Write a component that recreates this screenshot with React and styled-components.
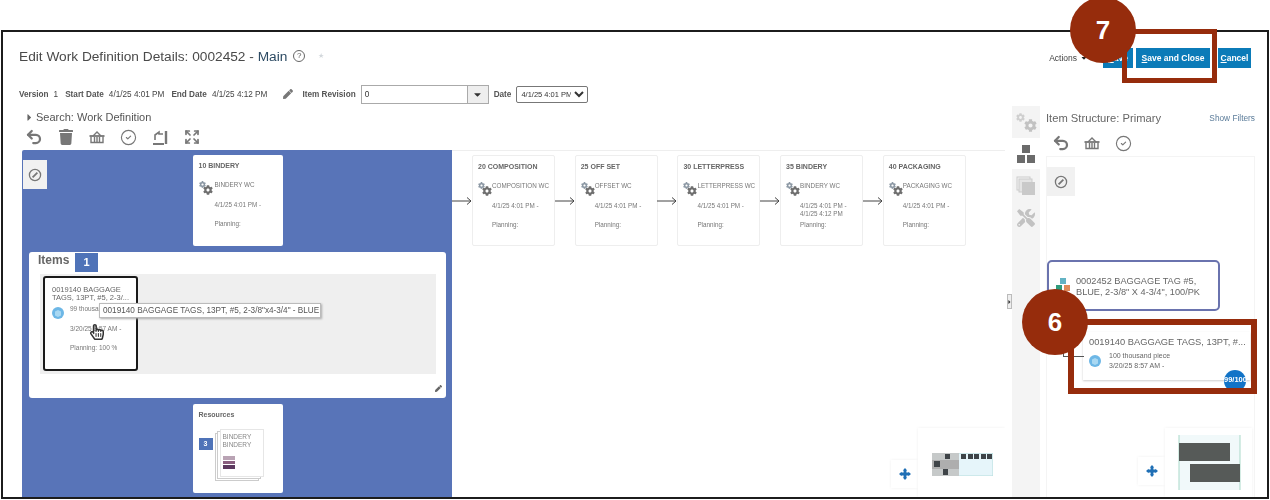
import React from 'react';
import styled, { createGlobalStyle } from 'styled-components';
import { CircleCheck, Expand, Undo2 } from 'lucide-react';
import { FaCaretDown, FaCaretRight, FaCog, FaPen, FaRegHandPointer, FaTools, FaTrash } from 'react-icons/fa';

const Global = createGlobalStyle`
    html, body { margin: 0; padding: 0; background: #fff; }
    body { font-family: "Liberation Sans", Arial, sans-serif; color: #555; }
`;

const operations = [
    { title: '20 COMPOSITION', wc: 'COMPOSITION WC', dates: ['4/1/25 4:01 PM -'] },
    { title: '25 OFF SET', wc: 'OFFSET WC', dates: ['4/1/25 4:01 PM -'] },
    { title: '30 LETTERPRESS', wc: 'LETTERPRESS WC', dates: ['4/1/25 4:01 PM -'] },
    { title: '35 BINDERY', wc: 'BINDERY WC', dates: ['4/1/25 4:01 PM -', '4/1/25 4:12 PM'] },
    { title: '40 PACKAGING', wc: 'PACKAGING WC', dates: ['4/1/25 4:01 PM -'] },
];

const Basket = ({ size = 18 }) => (
    <svg width={size} height={size} viewBox="0 0 18 18" fill="none" stroke="#777" strokeWidth="1.4">
        <path d="M5 8l4-4 4 4" />
        <path d="M1.5 8h15" strokeWidth="1.8" />
        <path d="M3 8.5v6h12v-6M6.5 9v5M9 9v5M11.5 9v5" />
    </svg>
);

const MoveBack = () => (
    <svg width="18" height="18" viewBox="0 0 18 18" fill="none" stroke="#777">
        <path d="M2 16h11" strokeWidth="2" />
        <path d="M15 3v13" strokeWidth="2.4" />
        <path d="M4 12V7l4-3v2h4" strokeWidth="1.6" />
    </svg>
);

const CompassMark = () => (
    <svg width="14" height="14" viewBox="0 0 14 14" fill="none" stroke="#777" strokeWidth="1.3">
        <circle cx="7" cy="7" r="5.6" />
        <path d="M4.6 9.4L9.4 4.6" strokeWidth="1.8" />
    </svg>
);

const Gears = () => (
    <GearBox>
        <FaCog size={7} color="#8c98a4" />
        <GearLarge><FaCog size={10} color="#6f6f6f" /></GearLarge>
    </GearBox>
);

const Cube = ({ $size = 12 }) => (
    <svg width={$size} height={$size} viewBox="0 0 12 12">
        <circle cx="6" cy="6" r="6" fill="#6db7e6" />
        <path d="M3 4.5L6 3l3 1.5v4L6 10 3 8.5z" fill="#a9d8f2" />
    </svg>
);

const Move = () => (
    <svg width="12" height="12" viewBox="0 0 13 13" fill="#1f6fb5">
        <path d="M6.5 0l2.4 2.8H8V5h2.2v-.9L13 6.5l-2.8 2.4V8H8v2.2h.9L6.5 13l-2.4-2.8H5V8H2.8v.9L0 6.5l2.8-2.4V5H5V2.8h-.9z" />
    </svg>
);

const OperationCard = ({ title, wc, dates }) => (
    <NodeCard>
        <NodeTitle>{title}</NodeTitle>
        <NodeBody>
            <Gears />
            <NodeLines>
                <NodeLine>{wc}</NodeLine>
                <NodeLine>{dates.map((d) => <div key={d}>{d}</div>)}</NodeLine>
                <NodeLine>Planning:</NodeLine>
            </NodeLines>
        </NodeBody>
    </NodeCard>
);

const Arrow = () => (
    <svg width="20" height="10" viewBox="0 0 20 10" fill="none" stroke="#444" strokeWidth="1">
        <path d="M0 5h19M15 1.5L19 5l-4 3.5" />
    </svg>
);

const App = () => {
    return (
        <Page>
            <Global />
            <Frame>
                <Header>
                    <TitleGroup>
                        <Title>Edit Work Definition Details: 0002452 - <TitleLink>Main</TitleLink></Title>
                        <HelpMark>?</HelpMark>
                        <FavDot>★</FavDot>
                    </TitleGroup>
                    <Actions>
                        <ActionsLabel>Actions <FaCaretDown size={8} color="#222" /></ActionsLabel>
                        <BlueButton $w={30} $gap={0}><u>S</u>ave</BlueButton>
                        <BlueButton $w={74} $gap={3}><u>S</u>ave and Close</BlueButton>
                        <BlueButton $w={33} $gap={8}><u>C</u>ancel</BlueButton>
                    </Actions>
                </Header>
                <Meta>
                    <MetaLabel>Version</MetaLabel><MetaValue>1</MetaValue>
                    <MetaLabel>Start Date</MetaLabel><MetaValue>4/1/25 4:01 PM</MetaValue>
                    <MetaLabel>End Date</MetaLabel><MetaValue>4/1/25 4:12 PM</MetaValue>
                    <PenBox><FaPen size={10} color="#777" /></PenBox>
                    <MetaLabel>Item Revision</MetaLabel>
                    <RevisionField>
                        <span>0</span>
                        <RevisionButton><FaCaretDown size={11} color="#333" /></RevisionButton>
                    </RevisionField>
                    <MetaLabel>Date</MetaLabel>
                    <DateSelect defaultValue="a"><option value="a">4/1/25 4:01 PM</option></DateSelect>
                </Meta>
                <Body>
                    <LeftColumn>
                        <SearchRow><FaCaretRight size={11} color="#666" />Search: Work Definition</SearchRow>
                        <Toolbar $gap={13.5} $left={3}>
                            <ToolIcon><Undo2 size={18} strokeWidth={3} color="#777" /></ToolIcon>
                            <ToolIcon><FaTrash size={16} color="#777" /></ToolIcon>
                            <ToolIcon><Basket /></ToolIcon>
                            <ToolIcon><CircleCheck size={17} strokeWidth={1.6} color="#777" /></ToolIcon>
                            <ToolIcon><MoveBack /></ToolIcon>
                            <ToolIcon><Expand size={16} strokeWidth={2.6} color="#777" /></ToolIcon>
                        </Toolbar>
                        <Canvas>
                            <BlueColumn>
                                <CompassButton $left={1} $top={10}><CompassMark /></CompassButton>
                                <OperationCard title="10 BINDERY" wc="BINDERY WC" dates={['4/1/25 4:01 PM -']} />
                                <ItemsPanel>
                                    <ItemsHeader>
                                        <ItemsTitle>Items</ItemsTitle>
                                        <CountBadge>1</CountBadge>
                                    </ItemsHeader>
                                    <ItemsTray>
                                        <ItemCard>
                                            <ItemTitle>0019140 BAGGAGE TAGS, 13PT, #5, 2-3/...</ItemTitle>
                                            <NodeBody>
                                                <ItemIcon><Cube /></ItemIcon>
                                                <NodeLines>
                                                    <NodeLine>99 thousand piece</NodeLine>
                                                    <NodeLine>3/20/25 8:57 AM -</NodeLine>
                                                    <NodeLine>Planning: 100 %</NodeLine>
                                                </NodeLines>
                                            </NodeBody>
                                            <HandCursor><FaRegHandPointer size={16} color="#333" /></HandCursor>
                                        </ItemCard>
                                        <Tooltip>0019140 BAGGAGE TAGS, 13PT, #5, 2-3/8"x4-3/4" - BLUE</Tooltip>
                                    </ItemsTray>
                                    <PanelPen><FaPen size={7} color="#666" /></PanelPen>
                                </ItemsPanel>
                                <ResourcesCard>
                                    <NodeTitle>Resources</NodeTitle>
                                    <ResourcesBody>
                                        <ResourceCount>3</ResourceCount>
                                        <ResourceStack>
                                            <div>BINDERY</div>
                                            <div>BINDERY</div>
                                            <ResourceBars>
                                                <ResourceBar $c="#b9a3b4" />
                                                <ResourceBar $c="#8a5f80" />
                                                <ResourceBar $c="#5d3a60" />
                                            </ResourceBars>
                                        </ResourceStack>
                                    </ResourcesBody>
                                </ResourcesCard>
                            </BlueColumn>
                            <FlowArea>
                                {operations.map((op) => (
                                    <FlowStep key={op.title}>
                                        <Arrow />
                                        <OperationCard {...op} />
                                    </FlowStep>
                                ))}
                                <PlusButton $right={87} $bottom={9}><Move /></PlusButton>
                                <Minimap $right={0} $pad="4px 0 0 2px">
                                    <svg width="61" height="23" viewBox="0 0 61 23">
                                        <rect width="61" height="23" fill="#e6f5fa" stroke="#b5dcdc" />
                                        <rect width="27" height="23" fill="#c6c9c9" />
                                        <rect x="0" y="7" width="27" height="9" fill="#aeaeae" />
                                        <rect x="13" y="1" width="5" height="5" fill="#3f4448" />
                                        <rect x="2" y="8" width="6" height="6" fill="#3f4448" />
                                        <rect x="11" y="16" width="5" height="6" fill="#3f4448" />
                                        {[29, 36, 42, 49, 55].map((x) => (
                                            <rect key={x} x={x} y="1" width="5" height="5" fill="#3f4448" />
                                        ))}
                                    </svg>
                                </Minimap>
                            </FlowArea>
                        </Canvas>
                    </LeftColumn>
                    <Splitter><SplitHandle><FaCaretRight size={6} color="#333" /></SplitHandle></Splitter>
                    <RightPanel>
                        <SideTabs>
                            <SideTab><GearsLarge><FaCog size={9} color="#cfcfcf" /><GearLow><FaCog size={13} color="#c2c2c2" /></GearLow></GearsLarge></SideTab>
                            <SideTab $active>
                                <svg width="20" height="20" viewBox="0 0 20 20" fill="#6b6b6b">
                                    <rect x="6" y="1" width="8" height="8" />
                                    <rect x="1" y="11" width="8" height="8" />
                                    <rect x="11" y="11" width="8" height="8" />
                                </svg>
                            </SideTab>
                            <SideTab>
                                <svg width="20" height="20" viewBox="0 0 20 20">
                                    <rect x="1" y="1" width="13" height="13" fill="none" stroke="#ccc" />
                                    <rect x="3" y="3" width="13" height="13" fill="#e4e4e4" stroke="#ccc" />
                                    <rect x="6" y="6" width="13" height="13" fill="#c9c9c9" />
                                </svg>
                            </SideTab>
                            <SideTab><FaTools size={18} color="#c2c2c2" /></SideTab>
                        </SideTabs>
                        <StructureColumn>
                            <StructureHeader>
                                <StructureTitle>Item Structure: Primary</StructureTitle>
                                <ShowFilters>Show Filters</ShowFilters>
                            </StructureHeader>
                            <Toolbar $gap={13} $left={6}>
                                <ToolIcon><Undo2 size={18} strokeWidth={3} color="#777" /></ToolIcon>
                                <ToolIcon><Basket /></ToolIcon>
                                <ToolIcon><CircleCheck size={17} strokeWidth={1.6} color="#777" /></ToolIcon>
                            </Toolbar>
                            <TreeArea>
                                <CompassButton $left={0} $top={10} $wide><CompassMark /></CompassButton>
                                <RootNode>
                                    <RootIcon>
                                        <svg width="17" height="17" viewBox="0 0 17 17">
                                            <rect x="5" y="1" width="6" height="6" fill="#63b3c4" />
                                            <rect x="1" y="8" width="6" height="6" fill="#2f9c7c" />
                                            <rect x="9" y="8" width="6" height="6" fill="#e08a5a" />
                                        </svg>
                                    </RootIcon>
                                    0002452 BAGGAGE TAG #5, BLUE, 2-3/8" X 4-3/4", 100/PK
                                </RootNode>
                                <ChildNode>
                                    <ChildTitle>0019140 BAGGAGE TAGS, 13PT, #...</ChildTitle>
                                    <ChildBody>
                                        <Cube />
                                        <div>
                                            <div>100 thousand piece</div>
                                            <div>3/20/25 8:57 AM -</div>
                                        </div>
                                    </ChildBody>
                                    <ProgressBadge>99/100</ProgressBadge>
                                </ChildNode>
                                <PlusButton $right={89} $bottom={12}><Move /></PlusButton>
                                <Minimap $right={2}>
                                    <svg width="87" height="69" viewBox="0 0 87 69">
                                        <rect x="14" y="7" width="61" height="55" fill="#f1f9fa" />
                                        <path d="M14 7v55M75 7v55" stroke="#a9d9c9" />
                                        <rect x="14" y="15" width="51" height="18" fill="#565a58" />
                                        <rect x="25" y="36" width="50" height="18" fill="#565a58" />
                                    </svg>
                                </Minimap>
                            </TreeArea>
                        </StructureColumn>
                    </RightPanel>
                </Body>
            </Frame>
            <Highlight $left={1122} $top={29} $w={95} $h={54} $b={5} />
            <Highlight $left={1068} $top={319} $w={189} $h={75} $b={6} />
            <Callout $left={1070} $top={-3}>7</Callout>
            <Callout $left={1022} $top={289}>6</Callout>
        </Page>
    );
}

const Page = styled.div`
    position: relative;
    width: 1270px;
    height: 500px;
    padding: 30px 1px 0 1px;
    box-sizing: border-box;
    overflow: hidden;
`;

const Frame = styled.div`
    box-sizing: border-box;
    width: 1268px;
    height: 469px;
    border: 2px solid #1c1c1c;
    background: #fff;
    display: flex;
    flex-direction: column;
    overflow: hidden;
    filter: blur(0.5px);
`;

const Header = styled.div`
    height: 48px;
    flex-shrink: 0;
    padding: 0 16px;
    display: flex;
    align-items: center;
    justify-content: space-between;
`;

const TitleGroup = styled.div`
    display: flex;
    align-items: center;
`;

const Title = styled.div`
    font-size: 13.7px;
    color: #4a4a4a;
`;

const TitleLink = styled.span`
    color: #2c4a63;
`;

const HelpMark = styled.span`
    width: 10px;
    height: 10px;
    margin-left: 6px;
    border: 1px solid #666;
    border-radius: 50%;
    font-size: 8px;
    line-height: 10px;
    text-align: center;
    color: #555;
`;

const FavDot = styled.span`
    margin-left: 13px;
    font-size: 7px;
    color: #d3d8dc;
`;

const Actions = styled.div`
    display: flex;
    align-items: center;
    margin-top: 3px;
`;

const ActionsLabel = styled.span`
    font-size: 8.5px;
    color: #444;
    margin-right: 15px;
    display: flex;
    align-items: center;
    gap: 3px;
`;

const BlueButton = styled.button`
    width: ${(p) => p.$w}px;
    height: 20px;
    margin-left: ${(p) => p.$gap}px;
    padding: 0;
    border: none;
    background: #0b7bb8;
    color: #fff;
    font-family: inherit;
    font-size: 8.5px;
    font-weight: bold;
`;

const Meta = styled.div`
    height: 20px;
    flex-shrink: 0;
    margin-top: 4px;
    padding-left: 16px;
    display: flex;
    align-items: center;
    font-size: 8.2px;
`;

const MetaLabel = styled.span`
    font-weight: bold;
    color: #555;
    margin-right: 5px;
`;

const MetaValue = styled.span`
    color: #444;
    margin-right: 7px;
`;

const PenBox = styled.span`
    display: flex;
    margin: 0 9px 0 9px;
`;

const RevisionField = styled.div`
    box-sizing: border-box;
    width: 128px;
    height: 19px;
    margin-right: 5px;
    padding-left: 3px;
    border: 1px solid #aaa;
    display: flex;
    align-items: center;
    justify-content: space-between;
    color: #333;
`;

const RevisionButton = styled.span`
    width: 20px;
    height: 17px;
    display: flex;
    align-items: center;
    justify-content: center;
    background: #eee;
    border-left: 1px solid #aaa;
`;

const DateSelect = styled.select`
    width: 72px;
    height: 17px;
    padding: 0;
    font-family: inherit;
    font-size: 7.5px;
    color: #333;
    background: #fff;
    border: 1px solid #777;
    border-radius: 2px;
`;

const Body = styled.div`
    flex: 1;
    min-height: 0;
    margin-top: 2px;
    display: flex;
`;

const LeftColumn = styled.div`
    width: 1002px;
    box-sizing: border-box;
    padding-left: 19px;
    display: flex;
    flex-direction: column;
`;

const SearchRow = styled.div`
    height: 14px;
    margin-top: 4px;
    padding-left: 2px;
    display: flex;
    align-items: center;
    gap: 1px;
    font-size: 11px;
    color: #555;
`;

const Toolbar = styled.div`
    height: 18px;
    margin-top: 4px;
    padding-left: ${(p) => p.$left}px;
    display: flex;
    align-items: center;
    gap: ${(p) => p.$gap}px;
`;

const ToolIcon = styled.span`
    width: 18px;
    height: 18px;
    display: flex;
    align-items: center;
    justify-content: center;
`;

const Canvas = styled.div`
    flex: 1;
    min-height: 0;
    margin-top: 4px;
    display: flex;
    overflow: hidden;
`;

const NodeLines = styled.div`
    display: grid;
    grid-auto-rows: 19.5px;
`;

const BlueColumn = styled.div`
    position: relative;
    width: 430px;
    flex-shrink: 0;
    box-sizing: border-box;
    padding: 5px 0 0 1px;
    background: #5874b8;
    border-radius: 2px 0 0 0;
    display: flex;
    flex-direction: column;
    align-items: center;
    gap: 6px;
    ${NodeLines} {
        margin-left: 2px;
    }
`;

const CompassButton = styled.div`
    position: absolute;
    left: ${(p) => p.$left}px;
    top: ${(p) => p.$top}px;
    width: ${(p) => (p.$wide ? 28 : 24)}px;
    height: 29px;
    background: #f1f1f1;
    display: flex;
    align-items: center;
    justify-content: center;
`;

const NodeCard = styled.div`
    box-sizing: border-box;
    width: 83px;
    height: 91px;
    flex-shrink: 0;
    padding: 6px 5px;
    background: #fff;
    border: 1px solid #eee;
    border-radius: 2px;
    font-size: 6.3px;
    color: #777;
    ${BlueColumn} & {
        width: 90px;
        padding: 6px;
        border: none;
    }
`;

const NodeTitle = styled.div`
    height: 9px;
    margin-bottom: 11px;
    font-size: 7px;
    line-height: 9px;
    font-weight: bold;
    color: #666;
    white-space: nowrap;
`;

const NodeBody = styled.div`
    display: flex;
`;

const NodeLine = styled.div`
    line-height: 8px;
    white-space: nowrap;
`;

const GearBox = styled.div`
    position: relative;
    width: 14px;
    height: 14px;
    flex-shrink: 0;
`;

const GearLarge = styled.span`
    position: absolute;
    left: 4px;
    top: 4px;
`;

const ItemsPanel = styled.div`
    position: relative;
    box-sizing: border-box;
    width: 417px;
    height: 146px;
    padding: 1px 10px 0 11px;
    background: #fff;
    border-radius: 3px;
`;

const ItemsHeader = styled.div`
    display: flex;
    height: 21px;
`;

const ItemsTitle = styled.div`
    font-size: 12px;
    font-weight: bold;
    line-height: 15px;
    color: #666;
    width: 37px;
    margin-left: -2px;
`;

const CountBadge = styled.div`
    width: 23px;
    height: 19px;
    background: #4f73b8;
    color: #fff;
    font-size: 11px;
    font-weight: bold;
    line-height: 19px;
    text-align: center;
`;

const ItemsTray = styled.div`
    position: relative;
    height: 100px;
    padding: 2px 3px;
    box-sizing: border-box;
    background: #efefef;
`;

const ItemCard = styled.div`
    position: relative;
    box-sizing: border-box;
    width: 95px;
    height: 95px;
    padding: 8px 7px;
    background: #fff;
    border: 2px solid #1a1a1a;
    border-radius: 3px;
    font-size: 6.5px;
    color: #777;
`;

const ItemTitle = styled.div`
    font-size: 7.5px;
    line-height: 8px;
    color: #666;
    margin-bottom: 3px;
    height: 16px;
`;

const ItemIcon = styled.span`
    width: 16px;
    margin-top: 2px;
    flex-shrink: 0;
`;

const HandCursor = styled.span`
    position: absolute;
    left: 44px;
    top: 46px;
    display: flex;
`;

const Tooltip = styled.div`
    position: absolute;
    left: 59px;
    top: 29px;
    box-sizing: border-box;
    width: 222px;
    height: 15px;
    padding-left: 3px;
    background: #fff;
    border: 1px solid #bbb;
    box-shadow: 1px 1px 2px #aaa;
    font-size: 8.2px;
    line-height: 13px;
    color: #555;
    white-space: nowrap;
`;

const PanelPen = styled.span`
    position: absolute;
    right: 4px;
    bottom: 6px;
    display: flex;
`;

const ResourcesCard = styled.div`
    box-sizing: border-box;
    width: 90px;
    height: 89px;
    flex-shrink: 0;
    padding: 6px;
    background: #fff;
    border-radius: 2px;
`;

const ResourcesBody = styled.div`
    display: flex;
    align-items: flex-start;
`;

const ResourceCount = styled.div`
    width: 14px;
    height: 12px;
    margin-top: 8px;
    background: #4f73b8;
    color: #fff;
    font-size: 7px;
    font-weight: bold;
    line-height: 12px;
    text-align: center;
    flex-shrink: 0;
`;

const ResourceStack = styled.div`
    position: relative;
    box-sizing: border-box;
    width: 44px;
    height: 48px;
    margin: -1px 0 0 7px;
    padding: 3px 2px;
    background: #fff;
    border: 1px solid #e6e6e6;
    font-size: 6.5px;
    line-height: 7.5px;
    color: #888;
    box-shadow: -3px 2px 0 -1px #fff, -3px 2px 0 0 #ccc, -5px 4px 0 -1px #fff, -5px 4px 0 0 #ccc;
`;

const ResourceBars = styled.div`
    margin-top: 8px;
    width: 12px;
    display: flex;
    flex-direction: column;
    gap: 1px;
`;

const ResourceBar = styled.div`
    height: 3.5px;
    background: ${(p) => p.$c};
`;

const FlowArea = styled.div`
    position: relative;
    flex: 1;
    padding-top: 4px;
    display: flex;
    align-items: flex-start;
    border-top: 1px solid #eee;
`;

const FlowStep = styled.div`
    display: flex;
    align-items: center;
    margin-right: -0.3px;
`;

const PlusButton = styled.div`
    position: absolute;
    right: ${(p) => p.$right}px;
    bottom: ${(p) => p.$bottom}px;
    width: 27px;
    height: 28px;
    background: #fff;
    box-shadow: 0 0 3px #f0f0f0;
    display: flex;
    align-items: center;
    justify-content: center;
`;

const Minimap = styled.div`
    position: absolute;
    right: ${(p) => p.$right}px;
    bottom: 0;
    box-sizing: border-box;
    width: 87px;
    height: 69px;
    padding: ${(p) => p.$pad || 0};
    background: #fff;
    box-shadow: 0 0 3px #f0f0f0;
    display: flex;
    align-items: center;
    justify-content: center;
`;

const Splitter = styled.div`
    width: 7px;
    flex-shrink: 0;
    padding-left: 2px;
    box-sizing: border-box;
    display: flex;
    align-items: center;
    justify-content: center;
`;

const SplitHandle = styled.div`
    width: 5px;
    height: 15px;
    flex-shrink: 0;
    background: #eee;
    border: 1px solid #bbb;
    box-sizing: border-box;
    display: flex;
    align-items: center;
    justify-content: center;
    overflow: hidden;
`;

const RightPanel = styled.div`
    flex: 1;
    display: flex;
    min-width: 0;
`;

const SideTabs = styled.div`
    width: 28px;
    flex-shrink: 0;
    background: #f4f4f4;
    display: flex;
    flex-direction: column;
`;

const SideTab = styled.div`
    height: 31px;
    margin-bottom: 1px;
    display: flex;
    align-items: center;
    justify-content: center;
    background: ${(p) => (p.$active ? '#fff' : 'transparent')};
`;

const GearsLarge = styled.span`
    display: flex;
    align-items: flex-start;
    margin-top: 2px;
`;

const GearLow = styled.span`
    display: flex;
    margin: 6px 0 0 -1px;
`;

const StructureColumn = styled.div`
    flex: 1;
    min-width: 0;
    padding: 4px 12px 0 6px;
    display: flex;
    flex-direction: column;
`;

const StructureHeader = styled.div`
    display: flex;
    align-items: center;
    justify-content: space-between;
    height: 15px;
    margin-bottom: 5px;
`;

const StructureTitle = styled.div`
    font-size: 11.2px;
    color: #666;
`;

const ShowFilters = styled.div`
    font-size: 8.3px;
    color: #5a7b99;
`;

const TreeArea = styled.div`
    position: relative;
    flex: 1;
    margin-top: 4px;
    padding-top: 103px;
    border: 1px solid #f4f4f4;
    border-bottom: none;
`;

const RootNode = styled.div`
    position: relative;
    box-sizing: border-box;
    width: 173px;
    height: 51px;
    padding: 14px 6px 0 27px;
    border: 2px solid #6a73ae;
    border-radius: 5px;
    font-size: 9.2px;
    line-height: 10.5px;
    color: #666;
`;

const RootIcon = styled.span`
    position: absolute;
    left: 6px;
    top: 15px;
`;

const ChildNode = styled.div`
    position: relative;
    box-sizing: border-box;
    width: 167px;
    height: 48px;
    margin: 21px 0 0 36px;
    padding: 5px 0 0 6px;
    background: #fff;
    box-shadow: 0 1px 2px #ccc;
    &::before {
        content: '';
        position: absolute;
        left: -20px;
        top: 17px;
        width: 20px;
        height: 7px;
        border-left: 1px solid #555;
        border-bottom: 1px solid #555;
    }
`;

const ChildTitle = styled.div`
    font-size: 9.3px;
    line-height: 11px;
    color: #666;
    white-space: nowrap;
`;

const ChildBody = styled.div`
    display: flex;
    align-items: center;
    gap: 8px;
    margin-top: 3px;
    font-size: 7px;
    line-height: 10px;
    color: #666;
`;

const ProgressBadge = styled.div`
    position: absolute;
    right: 4px;
    top: 38px;
    width: 22px;
    height: 22px;
    border-radius: 50%;
    background: #1173c7;
    color: #fff;
    font-size: 7.5px;
    font-weight: bold;
    line-height: 20px;
    text-align: center;
`;

const Highlight = styled.div`
    position: absolute;
    left: ${(p) => p.$left}px;
    top: ${(p) => p.$top}px;
    width: ${(p) => p.$w}px;
    height: ${(p) => p.$h}px;
    box-sizing: border-box;
    border: ${(p) => p.$b}px solid #962c0c;
`;

const Callout = styled.div`
    position: absolute;
    left: ${(p) => p.$left}px;
    top: ${(p) => p.$top}px;
    width: 66px;
    height: 66px;
    border-radius: 50%;
    background: #962c0c;
    color: #fff;
    font-size: 26px;
    font-weight: bold;
    line-height: 66px;
    text-align: center;
`;

export default App;
